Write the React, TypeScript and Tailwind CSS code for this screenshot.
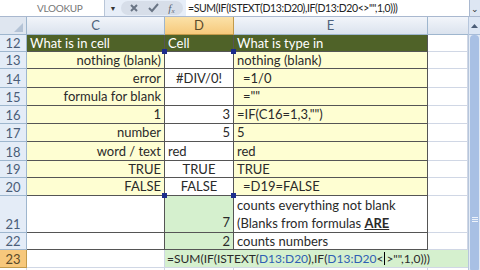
import { Fragment } from 'react'

type Cell = { c: string; d: string; e: React.ReactNode; dAlign?: 'l' | 'r' | 'c'; eIndent?: boolean }

const rows: (Cell & { n: number; h: string })[] = [
  { n: 13, h: 'h-[17px]', c: 'nothing (blank)', d: '', e: 'nothing (blank)' },
  { n: 14, h: 'h-[19px]', c: 'error', d: '#DIV/0!', dAlign: 'c', e: '=1/0', eIndent: true },
  { n: 15, h: 'h-[18px]', c: 'formula for blank', d: '', e: '=""', eIndent: true },
  { n: 16, h: 'h-[18px]', c: '1', d: '3', dAlign: 'r', e: '=IF(C16=1,3,"")' },
  { n: 17, h: 'h-[18px]', c: 'number', d: '5', dAlign: 'r', e: '5' },
  { n: 18, h: 'h-[19px]', c: 'word / text', d: 'red', dAlign: 'l', e: 'red' },
  { n: 19, h: 'h-[17px]', c: 'TRUE', d: 'TRUE', dAlign: 'c', e: 'TRUE' },
  { n: 20, h: 'h-[18px]', c: 'FALSE', d: 'FALSE', dAlign: 'c', e: '=D19=FALSE', eIndent: true },
]

const rowHead = 'flex items-end justify-center bg-[#e4ecf7] border-r border-b border-[#9eb6ce] text-[#4a5d78] pb-px'
const grid = 'border-r border-b border-[#d0d7e5]'
const dark = 'border-r border-b border-[#555]'

function Corner({ className = '' }: { className?: string }) {
  return <div className={`absolute w-[5px] h-[5px] bg-[#1c2c8c] ${className}`} />
}

export default function App() {
  return (
    <div
      className="w-[480px] h-[270px] overflow-hidden bg-white text-[13px] leading-none text-[#2a2a2a]"
      style={{ fontFamily: 'Lato, "Open Sans", sans-serif' }}
    >
      {/* formula bar */}
      <div className="flex h-[17px] items-stretch border-b border-[#a9b8cf] bg-[#e7eef8]">
        <div className="flex w-[105px] shrink-0 items-center border-r border-[#b9c6d8] bg-white pl-[37px] text-[10px] tracking-[-0.3px] text-[#777]">
          VLOOKUP
        </div>
        <div className="flex w-[16px] shrink-0 items-center justify-center text-[7px] text-[#333]">▼</div>
        <div className="my-[1px] flex w-[62px] shrink-0 items-center justify-around rounded-full bg-[#d7dee9] px-1">
          <svg width="10" height="10" viewBox="0 0 10 10">
            <path d="M2 2 L8 8 M8 2 L2 8" stroke="#6a7585" strokeWidth="2" />
          </svg>
          <svg width="11" height="10" viewBox="0 0 11 10">
            <path d="M1 5 L4 8 L10 1" stroke="#6a7585" strokeWidth="2" fill="none" />
          </svg>
          <span className="italic text-[11px] text-[#5b6675]" style={{ fontFamily: '"Liberation Serif", serif' }}>
            f<sub className="text-[7px]">x</sub>
          </span>
        </div>
        <div className="ml-[3px] flex min-w-0 flex-1 items-center whitespace-nowrap bg-white pl-[2px] text-[10.5px] tracking-[-0.4px] text-[#222]">
          =SUM(IF(ISTEXT(D13:D20),IF(D13:D20&lt;&gt;"",1,0)))
        </div>
        <div className="flex w-[11px] shrink-0 items-center justify-center border-l border-[#a9b8cf] bg-[#dde6f3] text-[9px] text-[#333]">
          ⌄
        </div>
      </div>

      <div className="flex">
        <div className="grid flex-1 grid-cols-[27px_138px_69px_194px_1fr]">
          {/* column headers */}
          <div className="relative h-[18px] border-r border-b border-[#9eb6ce] bg-[#dfe6f0]">
            <svg className="absolute bottom-[2px] right-[3px]" width="9" height="9" viewBox="0 0 9 9">
              <path d="M9 0 L9 9 L0 9 Z" fill="#b4c3d6" />
            </svg>
          </div>
          <div className="flex h-[18px] items-center justify-center border-r border-b border-[#9eb6ce] bg-gradient-to-b from-[#f2f5fa] to-[#dbe3ee] text-[#4f627c]">C</div>
          <div className="flex h-[18px] items-center justify-center border-r border-b border-[#c29a4b] bg-gradient-to-b from-[#fbe2a8] to-[#f6c97c] text-[#5a4a2a]">D</div>
          <div className="flex h-[18px] items-center justify-center border-r border-b border-[#9eb6ce] bg-gradient-to-b from-[#f2f5fa] to-[#dbe3ee] text-[#4f627c]">E</div>
          <div className="h-[18px] border-b border-[#9eb6ce] bg-gradient-to-b from-[#f2f5fa] to-[#dbe3ee]" />

          {/* row 12 */}
          <div className={`${rowHead} h-[17px]`}>12</div>
          <div className={`flex items-center bg-[#4f6228] pl-[3px] text-white ${dark}`}>What is in cell</div>
          <div className={`flex items-center bg-[#4f6228] pl-[3px] text-white ${dark}`}>Cell</div>
          <div className={`flex items-center bg-[#4f6228] pl-[3px] text-white ${dark}`}>What is type in</div>
          <div className={grid} />

          {rows.map((r, i) => (
            <Fragment key={r.n}>
              <div className={`${rowHead} ${r.h}`}>{r.n}</div>
              <div className={`flex items-center justify-end bg-[#fefed2] pr-[3px] ${dark}`}>{r.c}</div>
              <div
                className={`relative flex items-center bg-white px-[3px] ${dark} ${
                  r.dAlign === 'r' ? 'justify-end' : r.dAlign === 'c' ? 'justify-center' : 'justify-start'
                }`}
              >
                {i === 0 && (
                  <>
                    <Corner className="-left-[3px] -top-[3px]" />
                    <Corner className="-right-[3px] -top-[3px]" />
                  </>
                )}
                {r.d}
              </div>
              <div className={`flex items-center bg-[#fefed2] ${r.eIndent ? 'pl-[9px]' : 'pl-[3px]'} ${dark}`}>{r.e}</div>
              <div className={grid} />
            </Fragment>
          ))}

          {/* row 21 */}
          <div className={`${rowHead} h-[37px]`}>21</div>
          <div className={`bg-white ${dark}`} />
          <div className={`relative flex items-end justify-end bg-[#d5f0ce] pb-[3px] pr-[3px] ${dark}`}>
            <Corner className="-left-[3px] -top-[3px]" />
            <Corner className="-right-[3px] -top-[3px]" />7
          </div>
          <div className={`flex flex-col justify-around bg-white pl-[3px] ${dark}`}>
            <span>counts everything not blank</span>
            <span>
              (Blanks from formulas <b className="underline">ARE</b>
            </span>
          </div>
          <div className={grid} />

          {/* row 22 */}
          <div className={`${rowHead} h-[17px]`}>22</div>
          <div className={`bg-white ${dark}`} />
          <div className={`flex items-center justify-end bg-[#d5f0ce] pr-[3px] ${dark}`}>2</div>
          <div className={`flex items-center bg-white pl-[3px] ${dark}`}>counts numbers</div>
          <div className={grid} />

          {/* row 23 */}
          <div className="flex h-[18px] items-end justify-center border-r border-b border-[#c29a4b] bg-[#f7c87c] pb-px text-[#5a4a2a]">23</div>
          <div className={`bg-white ${grid}`} />
          <div className="col-span-3 flex items-center whitespace-nowrap border-b border-[#d0d7e5] bg-[#d5f0ce] pl-[2px] text-[12px]">
            =SUM(IF(ISTEXT(<span className="text-[#2f5fb3]">D13:D20</span>),IF(
            <span className="text-[#2f5fb3]">D13:D20</span>&lt;<span className="mx-[1px] inline-block h-[13px] w-px bg-black" />&gt;"",1,0)))
          </div>

          <div className="h-[4px] border-r border-[#d0d7e5]" />
          <div className="border-r border-[#d0d7e5]" />
          <div className="border-r border-[#d0d7e5]" />
          <div className="border-r border-[#d0d7e5]" />
          <div />
        </div>

        {/* vertical scrollbar */}
        <div className="flex w-[12px] shrink-0 flex-col border-l border-[#b6c6dc] bg-[#e3ebf6]">
          <div className="flex h-[18px] items-center justify-center border-b border-[#a7bcd8] bg-[#dce6f4]">
            <svg width="7" height="4" viewBox="0 0 7 4">
              <path d="M0 4 L3.5 0 L7 4 Z" fill="#4b5d78" />
            </svg>
          </div>
          <div className="mx-[1px] flex flex-1 flex-col items-center justify-end gap-[1px] rounded-sm bg-[#a8c0e4] pb-[50px]">
            <div className="h-px w-[6px] bg-[#eef3fa]" />
            <div className="h-px w-[6px] bg-[#eef3fa]" />
            <div className="h-px w-[6px] bg-[#eef3fa]" />
          </div>
        </div>
      </div>
    </div>
  )
}
